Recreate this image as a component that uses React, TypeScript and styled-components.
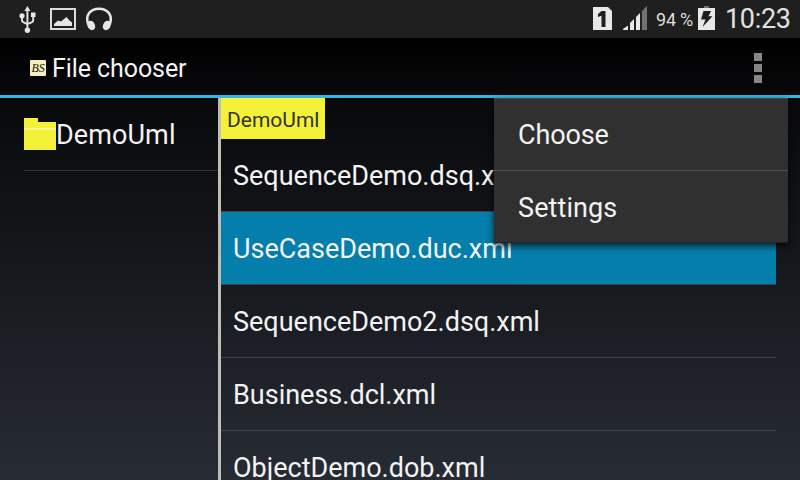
import React from 'react';
import styled, { createGlobalStyle } from 'styled-components';

const GlobalStyle = createGlobalStyle`
  * { box-sizing: border-box; }
  body { margin: 0; background: #000; overflow: hidden; }
`;

const Screen = styled.div`
  width: 800px;
  height: 480px;
  overflow: hidden;
  display: flex;
  flex-direction: column;
  position: relative;
  color: #f3f3f3;
  font-family: Roboto, 'Liberation Sans', sans-serif;
  background: linear-gradient(#000 38px, #08090b 98px, #272b33 480px);
`;

const StatusBar = styled.header`
  height: 38px;
  flex: none;
  display: flex;
  justify-content: space-between;
  background: #1f1f1f;
`;

const StatusIcons = styled.svg`
  display: block;
  flex: none;
`;

const StatusGroup = styled.div`
  display: flex;
  padding-right: 8px;
`;

const BatteryLevel = styled.span`
  width: 42px;
  font-size: 18px;
  line-height: 40px;
  letter-spacing: -0.2px;
  white-space: nowrap;
  color: #dedede;
`;

const Clock = styled.time`
  font-size: 27px;
  line-height: 38px;
  width: 67px;
  letter-spacing: -0.3px;
  color: #e2e2e2;
`;

const ActionBar = styled.div`
  height: 60px;
  flex: none;
  display: flex;
  align-items: center;
  padding: 2px 38px 0 30px;
  border-bottom: 3px solid #33b5e5;
`;

const AppIcon = styled.span`
  width: 16px;
  height: 16px;
  background: #f9edbd;
  color: #111;
  font: italic 12px/16px 'Liberation Serif', serif;
  letter-spacing: -0.2px;
  text-align: center;
  border-radius: 1px;
`;

const Title = styled.h1`
  margin: 0 auto 0 6px;
  padding-top: 2px;
  font-size: 25px;
  line-height: 30px;
  font-weight: 400;
  letter-spacing: -0.08px;
`;

const Overflow = styled.button`
  border: 0;
  padding: 1px 0 0;
  background: none;
  display: grid;
  gap: 3px;
`;

const OverflowDot = styled.i`
  width: 8px;
  height: 8px;
  background: #868686;
`;

const Content = styled.main`
  flex: 1;
  min-height: 0;
  display: flex;
`;

const FolderPane = styled.nav`
  width: 218px;
  padding-left: 24px;
`;

const FolderRow = styled.div`
  height: 73px;
  display: flex;
  align-items: center;
  border-bottom: 1px solid #333538;
  font-size: 27px;
  line-height: 34px;
  letter-spacing: 0.1px;
`;

const FolderName = styled.span`
  padding-top: 2px;
`;

const FilePane = styled.section`
  flex: 1;
  border-left: 3px solid #bebeb5;
  padding-right: 24px;
`;

const Crumb = styled.div`
  width: 104px;
  height: 41px;
  padding-left: 6px;
  background: #f4f238;
  color: #333;
  font-size: 21px;
  line-height: 44px;
`;

const FileRow = styled.div<{ $selected?: boolean }>`
  height: 73px;
  padding-left: 12px;
  line-height: 75px;
  font-size: 27px;
  white-space: nowrap;
  border-bottom: 1px solid #404348;
  background: ${(p) => (p.$selected ? '#047eaa' : 'transparent')};
`;

const Menu = styled.div`
  position: absolute;
  top: 98px;
  left: 494px;
  width: 294px;
  height: 145px;
  background: #303030;
  border-top: 1px solid #484848;
  border-bottom: 1px solid #222;
  border-radius: 0 0 3px 3px;
  box-shadow: 0 3px 7px rgba(0, 0, 0, 0.75);
`;

const MenuItem = styled.div`
  height: 72px;
  padding-left: 24px;
  line-height: 75px;
  font-size: 27px;
  letter-spacing: 0.1px;

  &:first-child {
    border-bottom: 1px solid #505050;
    line-height: 73px;
    letter-spacing: -0.15px;
  }
`;

const files = [
  'SequenceDemo.dsq.xml',
  'UseCaseDemo.duc.xml',
  'SequenceDemo2.dsq.xml',
  'Business.dcl.xml',
  'ObjectDemo.dob.xml',
];

const NotificationIcons = () => (
  <StatusIcons width="120" height="38" fill="#e6e6e6">
    <path d="M27.4 6l3 5h-6z" />
    <circle cx="27.4" cy="30.2" r="2.7" />
    <circle cx="22" cy="15.8" r="2.6" />
    <path d="M31 12.5h4.5v4.5H31z" />
    <path
      d="M27.4 10v20M22 16v4.2q0 1.6 1.7 2.2l3.7 1.8M33.2 16v4.2q0 1.6-1.7 2.2l-4.1 1.8"
      fill="none"
      stroke="#e6e6e6"
      strokeWidth="1.9"
    />
    <path d="M51 9h24v20H51z" fill="none" stroke="#dcdcdc" strokeWidth="2" />
    <path d="M54 26v-2l4-3.500 3 1 5.500-4.500 3 3.500 2.500 2V26z" />
    <path
      d="M88.200 24.500C84.800 15 90.500 8.700 99 8.700s14.200 6.300 10.800 15.800"
      fill="none"
      stroke="#e6e6e6"
      strokeWidth="2.500"
    />
    <ellipse cx="91.200" cy="25.400" rx="3.700" ry="5" transform="rotate(-28 91.200 25.400)" />
    <ellipse cx="106.800" cy="25.400" rx="3.700" ry="5" transform="rotate(28 106.800 25.400)" />
  </StatusIcons>
);

const SignalIcons = () => (
  <StatusIcons width="64" height="38" fill="#e8e8e8">
    <path d="M1 7h15l4 4v19H1z" />
    <path d="M9.500 11h4v16H9.500V15.800L6 17v-3z" fill="#1f1f1f" />
    <path d="M31 30v-1l5-3.500V30zM38 30v-7l4-4v11zM44 30V17l4-4v17z" />
    <path d="M50 30V11l5-5v24z" fill="#727272" />
  </StatusIcons>
);

const BatteryIcon = () => (
  <StatusIcons width="27" height="38" fill="#e8e8e8">
    <path d="M6 6h5v2H6z" fill="#727272" />
    <path d="M0 8h17v22H0z" />
    <path d="M5.500 11H13l-2.500 5.200H14.500L4.500 27l3-7.500H3z" fill="#1f1f1f" />
  </StatusIcons>
);

const FolderIcon = () => (
  <svg width="32" height="32">
    <path d="M0 0h14v4h18v28H0z" fill="#f4f238" />
    <path d="M0 10h32v2H0z" fill="#f8f594" />
  </svg>
);

export default function App() {
  return (
    <>
      <GlobalStyle />
      <Screen>
        <StatusBar>
          <NotificationIcons />
          <StatusGroup>
            <SignalIcons />
            <BatteryLevel>94 %</BatteryLevel>
            <BatteryIcon />
            <Clock>10:23</Clock>
          </StatusGroup>
        </StatusBar>
        <ActionBar>
          <AppIcon>BS</AppIcon>
          <Title>File chooser</Title>
          <Overflow aria-label="More options">
            <OverflowDot />
            <OverflowDot />
            <OverflowDot />
          </Overflow>
        </ActionBar>
        <Content>
          <FolderPane>
            <FolderRow>
              <FolderIcon />
              <FolderName>DemoUml</FolderName>
            </FolderRow>
          </FolderPane>
          <FilePane>
            <Crumb>DemoUml</Crumb>
            {files.map((name, i) => (
              <FileRow key={name} $selected={i === 1}>
                {name}
              </FileRow>
            ))}
          </FilePane>
        </Content>
        <Menu>
          <MenuItem>Choose</MenuItem>
          <MenuItem>Settings</MenuItem>
        </Menu>
      </Screen>
    </>
  );
}
